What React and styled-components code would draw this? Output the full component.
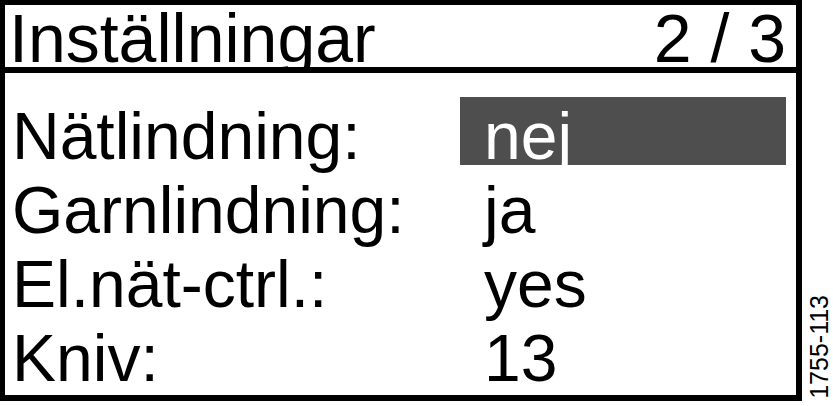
import React from 'react';
import styled, { createGlobalStyle } from 'styled-components';

const GlobalStyle = createGlobalStyle`
    html, body {
        margin: 0;
        padding: 0;
        background: #ffffff;
    }
    body {
        font-family: 'Liberation Sans', Arial, sans-serif;
        color: #000000;
    }
`

const rows = [
    { label: 'Nätlindning:', value: 'nej', selected: true },
    { label: 'Garnlindning:', value: 'ja' },
    { label: 'El.nät-ctrl.:', value: 'yes' },
    { label: 'Kniv:', value: '13' },
];

const App = () => {
    return (
        <Page>
            <GlobalStyle />
            <Screen>
                <TitleBar>
                    <span>Inställningar</span>
                    <span>2 / 3</span>
                </TitleBar>
                <Settings>
                    {rows.map((row) => (
                        <React.Fragment key={row.label}>
                            <Label>{row.label}</Label>
                            <Value selected={row.selected}>{row.value}</Value>
                        </React.Fragment>
                    ))}
                </Settings>
            </Screen>
            <Side>
                <FigureId>1755-113</FigureId>
            </Side>
        </Page>
    )
}

export default App;


const Page = styled.div`
    display: flex;
    width: 833px;
    height: 406px;
    overflow: hidden;
`

const Screen = styled.div`
    box-sizing: border-box;
    width: 802px;
    height: 401px;
    border-style: solid;
    border-color: #000;
    border-width: 5px 6px 6px 5px;
    display: flex;
    flex-direction: column;
    flex-shrink: 0;
`

const TitleBar = styled.div`
    box-sizing: border-box;
    height: 69px;
    padding: 0 10px 0 4px;
    border-bottom: 6px solid #000;
    display: flex;
    justify-content: space-between;
    font-size: 68px;
    line-height: 67px;
    overflow: hidden;
    white-space: nowrap;
`

const Settings = styled.div`
    display: grid;
    grid-template-columns: 448px 326px;
    grid-auto-rows: 74px;
    padding: 26px 10px 0 7px;
    font-size: 66px;
    line-height: 74px;
    white-space: nowrap;
`

const Label = styled.div`
    overflow: visible;
`

const Value = styled.div`
    box-sizing: border-box;
    height: ${(p) => (p.selected ? '68px' : '74px')};
    margin-top: ${(p) => (p.selected ? '-2px' : '0')};
    padding: ${(p) => (p.selected ? '2px' : '0')} 0 0 24px;
    background: ${(p) => (p.selected ? '#4e4e4e' : 'transparent')};
    color: ${(p) => (p.selected ? '#ffffff' : '#000000')};
    overflow: hidden;
`

const Side = styled.div`
    flex: 1;
    display: flex;
    align-items: flex-end;
    justify-content: center;
    padding: 0 0 7px 4px;
`

const FigureId = styled.div`
    writing-mode: vertical-rl;
    transform: rotate(180deg);
    font-size: 25px;
    line-height: 25px;
`
